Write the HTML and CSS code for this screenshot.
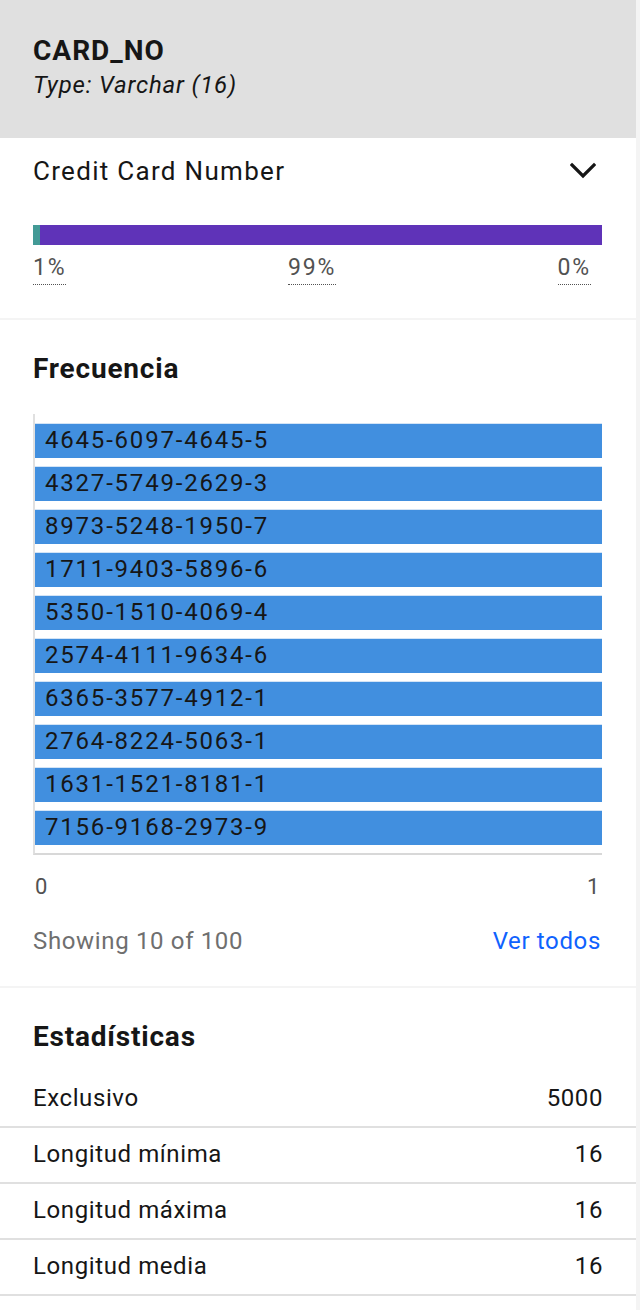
FILE: index.html
```html
<!DOCTYPE html>
<html lang="es">
<head>
<meta charset="utf-8">
<title>CARD_NO</title>
<link rel="stylesheet" href="styles.css">
</head>
<body>
<div class="panel">
  <header class="head">
    <h1 class="name">CARD_NO</h1>
    <p class="type">Type: Varchar (16)</p>
  </header>

  <section class="sec summary">
    <div class="title-row">
      <span class="title">Credit Card Number</span>
      <svg class="chev" width="26" height="18" viewBox="0 0 26 18" aria-hidden="true">
        <polyline points="2,3 13,14 24,3" fill="none" stroke="#161616" stroke-width="3.2" stroke-linecap="square"/>
      </svg>
    </div>
    <div class="dist">
      <span class="seg seg-a" style="width:1.25%"></span>
      <span class="seg seg-b" style="width:98.75%"></span>
    </div>
    <div class="dist-labels">
      <span class="pct">1%</span>
      <span class="pct">99%</span>
      <span class="pct">0%</span>
    </div>
  </section>

  <section class="sec freq">
    <h2 class="sec-title">Frecuencia</h2>
    <div class="chart">
      <div class="bar">4645-6097-4645-5</div>
      <div class="bar">4327-5749-2629-3</div>
      <div class="bar">8973-5248-1950-7</div>
      <div class="bar">1711-9403-5896-6</div>
      <div class="bar">5350-1510-4069-4</div>
      <div class="bar">2574-4111-9634-6</div>
      <div class="bar">6365-3577-4912-1</div>
      <div class="bar">2764-8224-5063-1</div>
      <div class="bar">1631-1521-8181-1</div>
      <div class="bar">7156-9168-2973-9</div>
    </div>
    <div class="axis"><span>0</span><span>1</span></div>
    <div class="foot">
      <span class="showing">Showing 10 of 100</span>
      <a class="link" href="#">Ver todos</a>
    </div>
  </section>

  <section class="stats">
    <h2 class="sec-title stats-title">Estadísticas</h2>
    <div class="row"><span>Exclusivo</span><span>5000</span></div>
    <div class="row"><span>Longitud mínima</span><span>16</span></div>
    <div class="row"><span>Longitud máxima</span><span>16</span></div>
    <div class="row"><span>Longitud media</span><span>16</span></div>
  </section>
</div>
</body>
</html>
```

FILE: styles.css
```css
* { box-sizing: border-box; }

html, body {
  margin: 0;
  padding: 0;
  background: #f4f4f4;
}

body {
  font-family: Roboto, "Noto Sans", Arial, sans-serif;
  color: #161616;
  letter-spacing: 0.6px;
}

.panel {
  width: 636px;
  min-height: 1310px;
  background: #ffffff;
}

/* header */
.head {
  height: 138px;
  background: #e0e0e0;
  padding: 33px 33px 0 33px;
}

.name {
  margin: 0;
  font-size: 28px;
  font-weight: 700;
  line-height: 36px;
  letter-spacing: 1px;
}

.type {
  margin: 0;
  font-size: 24px;
  font-style: italic;
  line-height: 32px;
  letter-spacing: 0.8px;
}

/* sections */
.sec {
  border-bottom: 2px solid #f4f4f4;
}

.summary {
  padding: 15px 34px 33px 33px;
}

.title-row {
  display: flex;
  align-items: center;
  justify-content: space-between;
  height: 36px;
}

.title {
  font-size: 26px;
  line-height: 36px;
  letter-spacing: 1.3px;
}

.chev {
  display: block;
  margin-right: 6px;
}

.dist {
  display: flex;
  height: 20px;
  margin-top: 36px;
}

.seg { display: block; height: 100%; }
.seg-a { background: #439a96; }
.seg-b { background: #5f33b8; }

.dist-labels {
  display: flex;
  justify-content: space-between;
  margin-top: 10px;
  padding-right: 11px;
}

.pct {
  display: inline-block;
  font-size: 23px;
  line-height: 26px;
  padding-bottom: 3px;
  color: #525252;
  letter-spacing: 1.8px;
  border-bottom: 1px dotted #525252;
}

.freq {
  padding: 32px 34px 29px 33px;
}

.sec-title {
  margin: 0;
  font-size: 28px;
  font-weight: 700;
  line-height: 34px;
  letter-spacing: 0.8px;
}

.chart {
  margin-top: 28px;
  border-left: 2px solid #e0e0e0;
  border-bottom: 2px solid #d8d8d8;
  padding: 10px 0 8px 0;
  display: flex;
  flex-direction: column;
  gap: 9px;
}

.bar {
  height: 34px;
  background: #418fdf;
  box-shadow: 0 -1px 0 #d3e4f6;
  padding: 0 0 2px 10px;
  font-size: 24px;
  line-height: 32px;
  letter-spacing: 1.8px;
  color: #161616;
}

.axis {
  display: flex;
  justify-content: space-between;
  margin-top: 18px;
  padding: 0 2px;
  font-size: 22px;
  line-height: 28px;
  color: #525252;
}

.foot {
  display: flex;
  justify-content: space-between;
  margin-top: 24px;
  font-size: 24px;
  line-height: 32px;
  letter-spacing: 0.65px;
}

.showing { color: #6f6f6f; }

.link {
  color: #0f62fe;
  text-decoration: none;
  margin-right: 1px;
}

/* stats */
.stats {
  padding-top: 32px;
}

.stats-title {
  padding: 0 33px;
  margin-bottom: 18px;
}

.row {
  display: flex;
  justify-content: space-between;
  padding: 10px 33px 12px 33px;
  font-size: 24px;
  line-height: 32px;
  letter-spacing: 0.6px;
  border-bottom: 2px solid #e0e0e0;
}
```
